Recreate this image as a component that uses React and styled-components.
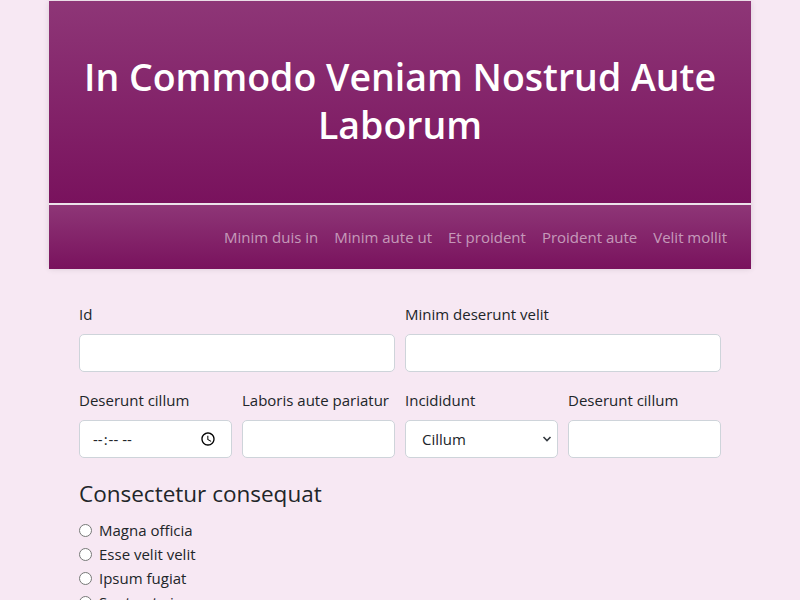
import React from "react";
import styled, { createGlobalStyle } from "styled-components";

const Global = createGlobalStyle`
  * { box-sizing: border-box; }
  html, body { margin: 0; padding: 0; }
  body {
    background: #f7e8f3;
    font-family: "Open Sans", "Noto Sans", sans-serif;
    color: #212529;
    font-size: 15px;
    line-height: 24px;
  }
`;

const Page = styled.div`
  width: 702px;
  margin: 1px auto 0;
`;

const Header = styled.header`
  box-shadow: 0 0 6px rgba(0, 0, 0, 0.12);
`;

const Banner = styled.div`
  background: linear-gradient(to bottom, #8e3677, #79125d);
  padding: 52px 24px 54px;
  text-align: center;
`;

const Title = styled.h1`
  margin: 0;
  color: #fff;
  font-size: 37.5px;
  font-weight: 600;
  line-height: 48px;
`;

const Nav = styled.nav`
  border-top: 2px solid #ece2ea;
  background: linear-gradient(to bottom, #8e3677, #79125d);
  display: flex;
  justify-content: flex-end;
  padding: 12px 16px;
`;

const NavLink = styled.a`
  color: rgba(255, 255, 255, 0.55);
  text-decoration: none;
  padding: 8px;
  font-size: 15px;
  line-height: 24px;
`;

const Form = styled.form`
  padding: 33px 30px 0;
`;

const Row = styled.div`
  display: grid;
  grid-template-columns: repeat(${(p) => p.cols}, minmax(0, 1fr));
  column-gap: 10px;
  margin-bottom: 16px;
`;

const Field = styled.div`
  display: flex;
  flex-direction: column;
  min-width: 0;
`;

const Label = styled.label`
  margin-bottom: 8px;
  line-height: 24px;
  white-space: nowrap;
`;

const Input = styled.input`
  height: 38px;
  width: 100%;
  border: 1px solid #ced4da;
  border-radius: 5px;
  background: #fff;
  padding: 6px 12px;
  font: inherit;
  color: #212529;
  outline: none;
`;

const SelectWrap = styled.div`
  position: relative;
`;

const Select = styled.select`
  appearance: none;
  height: 38px;
  width: 100%;
  border: 1px solid #ced4da;
  border-radius: 5px;
  background: #fff;
  padding: 6px 30px 6px 16px;
  font: inherit;
  color: #212529;
  outline: none;
`;

const Chevron = styled.svg`
  position: absolute;
  right: 6px;
  top: 15px;
  pointer-events: none;
`;

const Heading = styled.h4`
  margin: 22px 0 11px;
  font-size: 22.5px;
  font-weight: 400;
  line-height: 1.2;
`;

const RadioList = styled.div`
  display: flex;
  flex-direction: column;
`;

const RadioItem = styled.label`
  display: flex;
  align-items: center;
  line-height: 24px;
`;

const Radio = styled.input`
  margin: 0 7px 0 0;
  width: 13px;
  height: 13px;
`;

export default function App() {
  const links = ["Minim duis in", "Minim aute ut", "Et proident", "Proident aute", "Velit mollit"];
  const radios = ["Magna officia", "Esse velit velit", "Ipsum fugiat", "Sunt aute irure"];
  return (
    <>
      <Global />
      <Page>
        <Header>
          <Banner>
            <Title>In Commodo Veniam Nostrud Aute Laborum</Title>
          </Banner>
          <Nav>
            {links.map((l) => (
              <NavLink key={l} href="#">{l}</NavLink>
            ))}
          </Nav>
        </Header>
        <Form>
          <Row cols={2}>
            <Field>
              <Label>Id</Label>
              <Input type="text" />
            </Field>
            <Field>
              <Label>Minim deserunt velit</Label>
              <Input type="text" />
            </Field>
          </Row>
          <Row cols={4}>
            <Field>
              <Label>Deserunt cillum</Label>
              <Input type="time" />
            </Field>
            <Field>
              <Label>Laboris aute pariatur</Label>
              <Input type="text" />
            </Field>
            <Field>
              <Label>Incididunt</Label>
              <SelectWrap>
                <Select defaultValue="Cillum">
                  <option>Cillum</option>
                  <option>Dolor</option>
                </Select>
                <Chevron width="10" height="8" viewBox="0 0 10 8">
                  <path d="M1.5 2 L5 5.5 L8.5 2" fill="none" stroke="#343a40" strokeWidth="1.6" />
                </Chevron>
              </SelectWrap>
            </Field>
            <Field>
              <Label>Deserunt cillum</Label>
              <Input type="text" />
            </Field>
          </Row>
          <Heading>Consectetur consequat</Heading>
          <RadioList>
            {radios.map((r) => (
              <RadioItem key={r}>
                <Radio type="radio" name="cc" />
                {r}
              </RadioItem>
            ))}
          </RadioList>
        </Form>
      </Page>
    </>
  );
}
